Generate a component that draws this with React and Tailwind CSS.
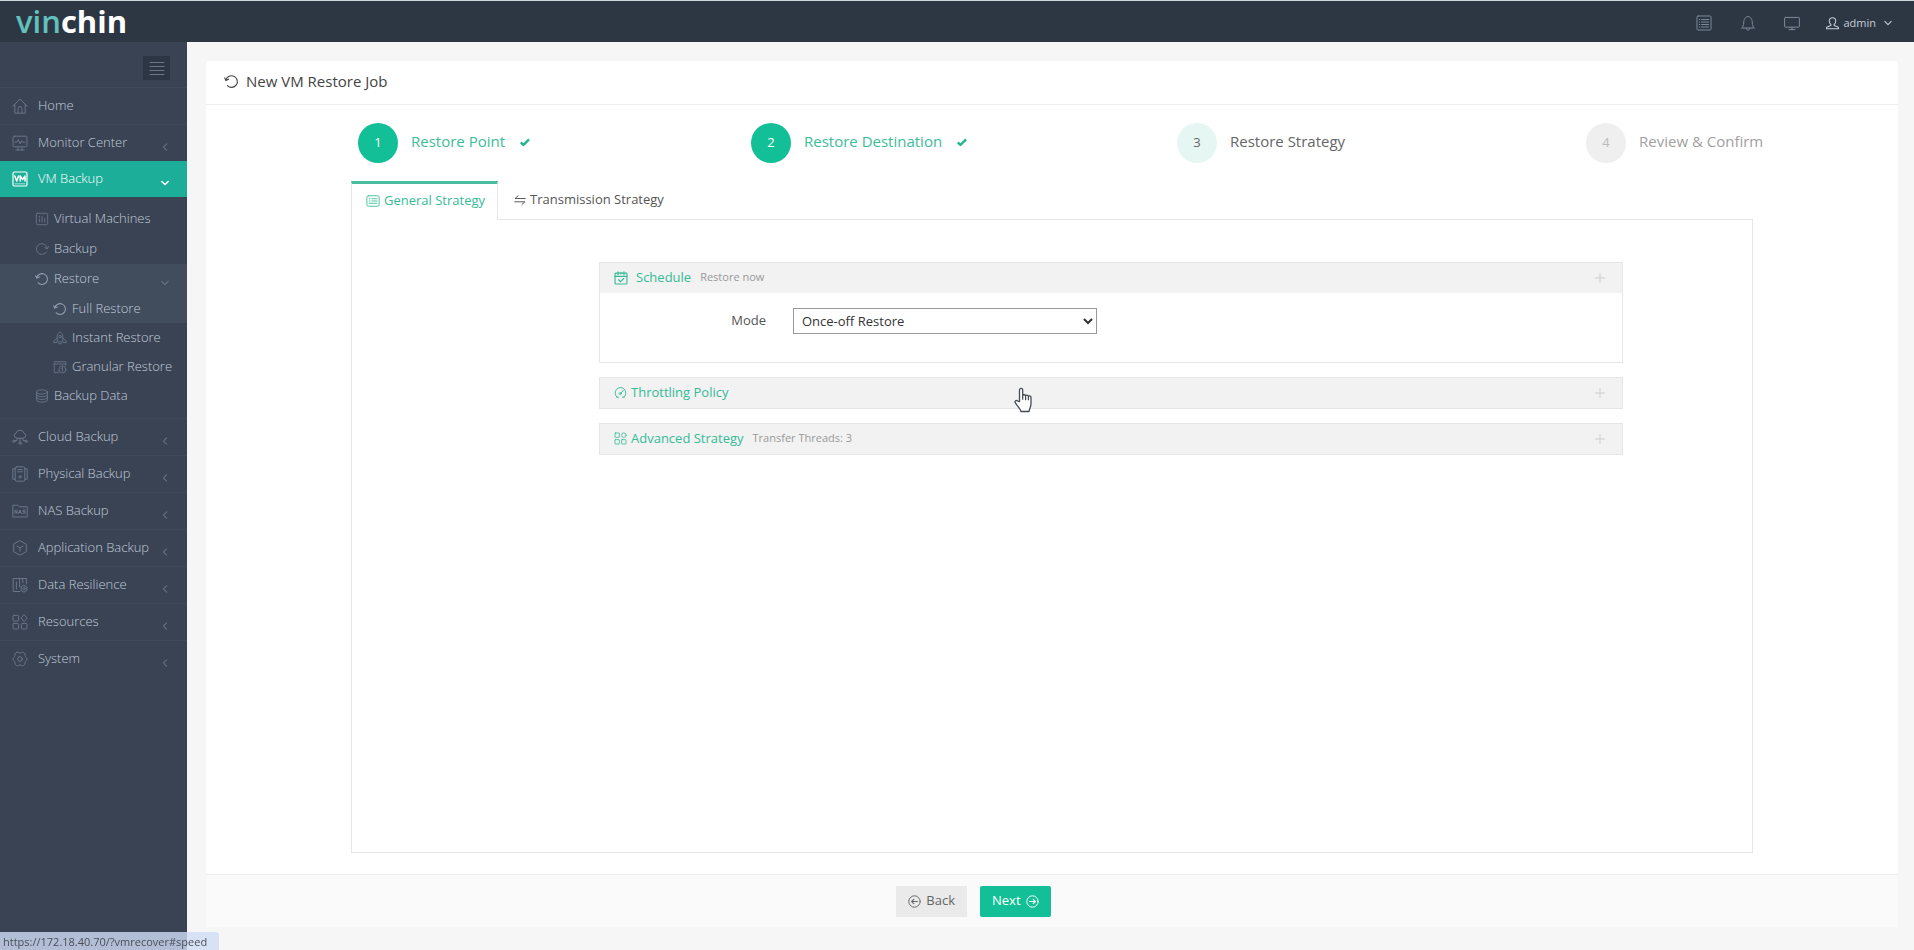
import React, { useState } from 'react';

const Icon = ({ children, className = 'size-4', box = 16 }) => (
  <svg
    viewBox={`0 0 ${box} ${box}`}
    className={`shrink-0 ${className}`}
    fill="none"
    stroke="currentColor"
    strokeWidth="1"
    strokeLinecap="round"
    strokeLinejoin="round"
    aria-hidden="true"
  >
    {children}
  </svg>
);

const HomeIcon = (props) => (
  <Icon {...props}>
    <path d="M1 8 8 1l7 7M2.800 6.600v8.600h10.400V6.600M6 15v-4.400a2 2 0 0 1 4 0V15" />
  </Icon>
);

const MonitorIcon = (props) => (
  <Icon {...props}>
    <rect x="1" y="1.200" width="14" height="10.600" rx="1.400" />
    <path d="M3 7.200h1.800l1.400-2.600 2 4.400 1.500-3.400 1 1.600H13M4 15h8M6 12v3M10 12v3" />
  </Icon>
);

const VmIcon = (props) => (
  <Icon {...props}>
    <rect x="1" y="1" width="14" height="14" rx="1.600" strokeWidth="1.200" />
    <path d="m2.800 5 1.900 5L6.600 5M8.200 10V5l2.400 3.600L13 5v5" strokeWidth="1.500" />
    <path d="M3 12.800h10" strokeWidth="1" opacity=".6" />
  </Icon>
);

const MachinesIcon = (props) => (
  <Icon {...props}>
    <rect x="1.500" y="1.500" width="13" height="13" rx="1.400" />
    <path d="M5 5v.8M5 8v3.400M8 5.200v6.200M11 7.600v3.800" />
  </Icon>
);

const RedoIcon = (props) => (
  <Icon {...props}>
    <path d="M13.200 11.200A6.200 6.200 0 1 1 14 7" />
    <path d="m11.200 6.200 2.800 1.600L15.600 5" />
  </Icon>
);

const UndoIcon = (props) => (
  <Icon {...props}>
    <path d="M2 6.600a6.200 6.200 0 1 1 1.600 5.800" strokeWidth="1.200" />
    <path d="M.8 4.200 2 6.800l2.900-1.200" strokeWidth="1.200" />
  </Icon>
);

const RocketIcon = (props) => (
  <Icon {...props}>
    <path d="M4.800 12V6C4.800 3.600 6.300 1.800 8 1c1.700.8 3.200 2.600 3.200 5v6z" />
    <circle cx="8" cy="6.400" r="1.500" />
    <path d="M4.800 8 1 11.400v1.800h3.200M11.200 8l3.800 3.400v1.800h-3.200M6.500 14.500h3" />
  </Icon>
);

const GranularIcon = (props) => (
  <Icon {...props}>
    <path d="M6 14.500H2.200a.8.8 0 0 1-.8-.8V2h13.200v4M1.400 4.600h13.200" />
    <circle cx="10.800" cy="10.800" r="4" />
    <path d="M10.800 8.800v4M9.400 10.200l1.400-1.400M6 12.800l1-1" />
  </Icon>
);

const DatabaseIcon = (props) => (
  <Icon {...props}>
    <ellipse cx="8" cy="3.400" rx="6.200" ry="2.400" />
    <path d="M1.800 3.400v9.200c0 1.300 2.800 2.400 6.200 2.400s6.200-1.100 6.200-2.400V3.400" />
    <path d="M1.800 6.500c0 1.300 2.800 2.400 6.200 2.400s6.200-1.100 6.200-2.400M1.800 9.600c0 1.300 2.800 2.400 6.200 2.400s6.200-1.100 6.200-2.400" />
  </Icon>
);

const CloudIcon = (props) => (
  <Icon {...props}>
    <path d="M4.600 9.200a2.700 2.700 0 0 1-.5-5.200A4 4 0 0 1 11.800 4a2.700 2.700 0 0 1-.4 5.200z" />
    <path d="M8 9.200v4M5 9.200v2.400H2.800M11 9.200v2.400h2.200" />
    <circle cx="8" cy="14.200" r="1.100" />
    <circle cx="1.800" cy="12.200" r="1.100" />
    <circle cx="14.200" cy="12.200" r="1.100" />
  </Icon>
);

const ServerIcon = (props) => (
  <Icon {...props}>
    <rect x="3.200" y=".8" width="9.600" height="14.400" rx="1.500" />
    <path d="M5.600 3.600h4.800M5.600 5.800h4.800M3.200 2.800H.8v10.400h2.400M12.800 2.800h2.400v10.400h-2.400" />
    <circle cx="8" cy="10.800" r="1.200" />
  </Icon>
);

const NasIcon = (props) => (
  <Icon {...props}>
    <path d="M.8 13.600V2.200h5l1.500 1.600h7.900v9.800z" />
    <path d="M3 10.400V7l2 3.400V7M6.500 10.400 7.900 7l1.400 3.400M7 9.400h1.800M13 7.200h-2v1.500h2v1.600h-2.200" />
  </Icon>
);

const CubeIcon = (props) => (
  <Icon {...props}>
    <path d="m8 .8 6.300 3.500v7.400L8 15.200l-6.300-3.500V4.300z" />
    <path d="M5 6.200 8 8l3-1.800M8 8v3.400" />
  </Icon>
);

const ResilienceIcon = (props) => (
  <Icon {...props}>
    <path d="M8 14.500H1.200v-13h13.200V7M4.400 5v7M7.600 1.800v8M10.800 1.800v3.800" />
    <circle cx="12" cy="11.800" r="1.200" />
    <path d="m12 8.400 2.900 1.700v3.400L12 15.200l-2.900-1.700v-3.400z" />
  </Icon>
);

const GridIcon = (props) => (
  <Icon {...props}>
    <rect x="1" y="1.400" width="5.600" height="5.600" rx="1" />
    <rect x="1" y="9.400" width="5.600" height="5.600" rx="1" />
    <rect x="9.400" y="9.400" width="5.600" height="5.600" rx="1" />
    <path d="m12.200.8 3 3.400-3 3.400-3-3.400z" />
  </Icon>
);

const BlocksIcon = (props) => (
  <Icon {...props}>
    <rect x="1.200" y="1.200" width="5.400" height="5.400" rx=".6" />
    <rect x="1.200" y="9.400" width="5.400" height="5.400" rx=".6" />
    <rect x="9.400" y="9.400" width="5.400" height="5.400" rx=".6" />
    <circle cx="12.100" cy="3.900" r="2.800" />
  </Icon>
);

const SystemIcon = (props) => (
  <Icon {...props}>
    <path d="M5.600 1.200c.8 0 1.200.9 2.400.9s1.600-.9 2.400-.9c1 0 2.200.8 2.500 1.700.3.800-.1 1.600.5 2.600.6 1 1.600 1.200 1.600 2.500s-1 1.500-1.600 2.500c-.6 1-.2 1.800-.5 2.600-.3.900-1.500 1.700-2.500 1.700-.8 0-1.200-.9-2.400-.9s-1.600.9-2.400.9c-1 0-2.200-.8-2.500-1.700-.3-.8.100-1.600-.5-2.600C2 9.500 1 9.300 1 8s1-1.500 1.600-2.500c.6-1 .2-1.800.5-2.600.3-.9 1.500-1.700 2.500-1.700z" />
    <circle cx="8" cy="8" r="2.300" />
  </Icon>
);

const ListIcon = (props) => (
  <Icon {...props}>
    <rect x="1" y="1" width="14" height="14" rx="1.200" />
    <path d="M3.400 4.500h.4M5.600 4.500h7M3.400 7h.4M5.600 7h7M3.400 9.500h.4M5.600 9.500h7M3.400 12h.4M5.600 12h7" />
  </Icon>
);

const BellIcon = (props) => (
  <Icon {...props}>
    <path d="M1.800 12.800c1.500-1.200 1.900-2.400 1.900-5C3.700 4.400 5.400 1.600 8 1.600s4.300 2.800 4.300 6.200c0 2.600.4 3.800 1.900 5z" />
    <path d="M6.200 13c0 1.200.8 2.200 1.800 2.200s1.800-1 1.800-2.200" />
  </Icon>
);

const ScreenIcon = (props) => (
  <Icon {...props}>
    <rect x=".6" y="2.400" width="14.800" height="9.800" rx=".8" />
    <path d="M8 12.200v2.400M5 14.600h6" />
  </Icon>
);

const UserIcon = (props) => (
  <Icon {...props}>
    <path
      d="M6 9.200C4.600 8 4 6.600 4 5c0-2.500 1.600-4 4-4s4 1.500 4 4c0 1.600-.6 3-2 4.200v1.300l4.600 1.700c.6.300.8.900.8 2.200H.6c0-1.300.2-1.900.8-2.200L6 10.500z"
      strokeWidth="1.300"
    />
  </Icon>
);

const Chevron = ({ down, className = 'size-2', weight = 1.3 }) => (
  <Icon box={10} className={className}>
    <path d={down ? 'M1 3l4 4 4-4' : 'M7 1 3 5l4 4'} strokeWidth={weight} />
  </Icon>
);

const CheckIcon = ({ className = '' }) => (
  <Icon box={12} className={`size-3 ${className}`}>
    <path d="m1.800 6.400 2.600 2.600 5.600-5.600" strokeWidth="2.400" strokeLinecap="butt" />
  </Icon>
);

const CardIcon = (props) => (
  <Icon {...props}>
    <rect x="1" y="2" width="14" height="12" rx="1.800" />
    <path d="M3.600 5.400h1M6.600 5.400h6M3.600 8h1M6.600 8h6M3.600 10.600h8.800" />
  </Icon>
);

const TransferIcon = (props) => (
  <Icon {...props}>
    <path d="M15 6H1.500l4-3.600M1 10.400h13.500l-4 3.600" strokeWidth="1.300" />
  </Icon>
);

const CalendarIcon = (props) => (
  <Icon {...props}>
    <rect x="1.200" y="2.400" width="13.600" height="12.400" rx=".8" strokeWidth="1.300" />
    <path
      d="M1.200 6.200h13.600M4.600.8v3.400M11.400.8v3.400M8 1.600v1.800M5.200 10l2.200 2.200 3.800-3.600"
      strokeWidth="1.300"
    />
  </Icon>
);

const GaugeIcon = (props) => (
  <Icon {...props}>
    <path
      d="M4 13.800a6.600 6.600 0 1 1 8 0M3.400 13.800h2.200M10.400 13.800h2.200M11.400 5.400 8.600 8.600"
      strokeWidth="1.200"
    />
    <circle cx="7.600" cy="9.400" r="1.300" />
  </Icon>
);

const ArrowCircle = ({ left }) => (
  <Icon className="size-[13px]">
    <circle cx="8" cy="8" r="7" strokeWidth="1.200" />
    <path
      d={left ? 'M11.500 8h-7M7.200 5.400 4.500 8l2.700 2.600' : 'M4.500 8h7M8.800 5.400 11.500 8l-2.700 2.600'}
      strokeWidth="1.300"
    />
  </Icon>
);

const menuTop = [
  { name: 'Home', icon: HomeIcon, leaf: true },
  { name: 'Monitor Center', icon: MonitorIcon },
];

const vmMenu = [
  { name: 'Virtual Machines', icon: MachinesIcon },
  { name: 'Backup', icon: RedoIcon },
  {
    name: 'Restore',
    icon: UndoIcon,
    children: [
      { name: 'Full Restore', icon: UndoIcon, active: true },
      { name: 'Instant Restore', icon: RocketIcon },
      { name: 'Granular Restore', icon: GranularIcon },
    ],
  },
  { name: 'Backup Data', icon: DatabaseIcon },
];

const menuBottom = [
  { name: 'Cloud Backup', icon: CloudIcon },
  { name: 'Physical Backup', icon: ServerIcon },
  { name: 'NAS Backup', icon: NasIcon },
  { name: 'Application Backup', icon: CubeIcon },
  { name: 'Data Resilience', icon: ResilienceIcon },
  { name: 'Resources', icon: GridIcon },
  { name: 'System', icon: SystemIcon },
];

const steps = [
  { name: 'Restore Point', state: 'done' },
  { name: 'Restore Destination', state: 'done' },
  { name: 'Restore Strategy', state: 'current' },
  { name: 'Review & Confirm', state: 'todo' },
];

const stepStyles = {
  done: { circle: 'bg-[#12bf97] text-white', label: 'text-[#3bbd98]' },
  current: { circle: 'bg-[#e6f7f3] text-[#666]', label: 'text-[#666]' },
  todo: { circle: 'bg-[#efefef] text-[#bbb]', label: 'text-[#a0a0a0]' },
};

const Header = () => (
  <header className="flex h-[42px] shrink-0 items-center justify-between border-t border-[#cdd5d8] bg-[#2d3643] pl-4 pr-[22px]">
    <a href="#home" className="text-[31px] leading-none">
      <span className="font-semibold text-[#62c1bd]">vin</span>
      <span className="font-bold text-white">chin</span>
    </a>
    <div className="flex items-center pt-[3px] text-[#7d8a9d]">
      <button aria-label="Tasks" className="mr-7">
        <ListIcon />
      </button>
      <button aria-label="Alerts" className="mr-7">
        <BellIcon />
      </button>
      <button aria-label="Console" className="mr-[26px]">
        <ScreenIcon />
      </button>
      <button className="flex items-center text-[11px] text-[#c3cddb]">
        <UserIcon className="size-[13px]" />
        <span className="ml-1">admin</span>
        <Chevron down className="ml-2 size-2" weight={1.4} />
      </button>
    </div>
  </header>
);

const MenuRow = ({ item }) => {
  const ItemIcon = item.icon;
  return (
    <li className="border-t border-[#3f495a]">
      <a href="#menu" className="flex h-9 items-center pl-3 pr-[18px]">
        <ItemIcon className="size-4 text-[#69768a]" />
        <span className="ml-[10px] flex-1 whitespace-nowrap">{item.name}</span>
        {!item.leaf && <Chevron className="mt-2 size-2 text-[#69768a]" />}
      </a>
    </li>
  );
};

const SubLink = ({ item, nested }) => {
  const ItemIcon = item.icon;
  return (
    <a
      href="#restore"
      className={`flex items-center pr-[18px] ${nested ? 'h-[29px] pl-[53px]' : 'h-[30px] pl-[35px]'} ${
        item.active || item.children ? 'bg-[#414c5d]' : ''
      }`}
    >
      <ItemIcon
        className={`size-[14px] ${item.active || item.children ? 'text-[#95a1b3]' : 'text-[#69768a]'}`}
      />
      <span className="ml-[5px] flex-1 whitespace-nowrap">{item.name}</span>
      {item.children && <Chevron down className="mt-2 size-2 text-[#69768a]" />}
    </a>
  );
};

const Sidebar = () => (
  <aside className="w-[187px] shrink-0 bg-[#394353] text-[13px] font-light text-[#c0cbda]">
    <div className="flex justify-end pb-[7px] pr-[17px] pt-[14px]">
      <button
        aria-label="Toggle menu"
        className="flex h-6 w-[27px] items-center justify-center bg-[#2c3644] text-[#69768a]"
      >
        <Icon>
          <path d="M1 2.500h14M1 6.500h14M1 10.500h14M1 14.500h14" />
        </Icon>
      </button>
    </div>
    <nav>
      <ul>
        {menuTop.map((item) => (
          <MenuRow key={item.name} item={item} />
        ))}
        <li>
          <a href="#vm" className="flex h-9 items-center bg-[#1cae99] pl-3 pr-[18px] text-white">
            <VmIcon />
            <span className="ml-[10px] flex-1">VM Backup</span>
            <Chevron down className="mt-2 size-2" weight={1.8} />
          </a>
          <ul className="py-[7px]">
            {vmMenu.map((item) => (
              <li key={item.name}>
                <SubLink item={item} />
                {item.children && (
                  <ul>
                    {item.children.map((child) => (
                      <li key={child.name}>
                        <SubLink item={child} nested />
                      </li>
                    ))}
                  </ul>
                )}
              </li>
            ))}
          </ul>
        </li>
        {menuBottom.map((item) => (
          <MenuRow key={item.name} item={item} />
        ))}
      </ul>
    </nav>
  </aside>
);

const Steps = () => (
  <ol className="ml-[152px] mr-[113px] grid grid-cols-[393fr_426fr_409fr_199fr] pt-[18px]">
    {steps.map((step, i) => (
      <li key={step.name} className="flex items-center text-[15px]">
        <span
          className={`flex size-10 shrink-0 items-center justify-center rounded-full text-[13px] ${stepStyles[step.state].circle}`}
        >
          {i + 1}
        </span>
        <span className="flex items-center pb-[3px] pl-[13px]">
          <span className={`whitespace-nowrap ${stepStyles[step.state].label}`}>{step.name}</span>
          {step.state === 'done' && <CheckIcon className="ml-[14px] text-[#20b590]" />}
        </span>
      </li>
    ))}
  </ol>
);

const HandCursor = () => (
  <svg viewBox="0 0 20 26" className="absolute left-[40.4%] top-[9px] h-[26px] w-5" aria-hidden="true">
    <path
      d="M6.500 14.500V3a1.600 1.600 0 0 1 3.200 0v5.800c0-1.500 2.800-1.400 2.900.3 0-1.400 2.700-1.200 2.800.5.100-1.200 2.600-1 2.600 1V17c0 3-1.500 4-2 7.500H8c-.6-2.500-3-4.600-5.600-8.600-1.200-1.900 1-3.200 2.400-1.800z"
      fill="#fff"
      stroke="#444a52"
      strokeWidth="1.300"
      strokeLinejoin="round"
    />
    <path d="M9.700 8.800v4M12.600 9.200v4M15.400 10v3.200" stroke="#444a52" strokeWidth="1.200" />
  </svg>
);

const Section = ({ icon, title, note, cursor, children }) => (
  <section className="border border-[#e6e6e6]">
    <h3 className="relative bg-[#f2f2f2]">
      <button className="flex h-[30px] w-full items-center pl-[14px] pr-[17px] text-[13px] text-[#35bb96]">
        <span className="flex items-center pb-px">
          {icon}
          <span>{title}</span>
          {note && <span className="ml-[9px] text-[11px] text-[#999]">{note}</span>}
        </span>
        <Icon box={10} className="ml-auto size-[10px] text-[#ccc]">
          <path d="M5 0v10M0 5h10" />
        </Icon>
      </button>
      {cursor && <HandCursor />}
    </h3>
    {children}
  </section>
);

const App = () => {
  const [mode, setMode] = useState('once');

  return (
    <div className="flex min-h-screen flex-col bg-[#f6f6f6] font-['Open_Sans','Noto_Sans',sans-serif] text-[#555]">
      <Header />
      <div className="flex flex-1">
        <Sidebar />
        <main className="flex flex-1 flex-col pb-[23px] pl-[19px] pr-4 pt-[19px]">
          <div className="flex flex-1 flex-col bg-white">
            <div className="flex h-11 items-center border-b border-[#efefef] pb-[2px] pl-[18px] text-[#444]">
              <UndoIcon className="size-[15px]" />
              <h1 className="ml-[7px] text-[15px]">New VM Restore Job</h1>
            </div>

            <Steps />

            <div className="mx-[145px] mb-[21px] mt-[18px] flex flex-1 flex-col">
              <div role="tablist" className="flex text-[13px]">
                <button
                  role="tab"
                  aria-selected="true"
                  className="z-10 -mb-px flex h-[39px] items-center border-x border-t-3 border-x-[#e6e6e6] border-t-[#4bbd9f] bg-white pb-[2px] pl-[14px] pr-3 text-[#35bb96]"
                >
                  <CardIcon className="size-[14px]" />
                  <span className="ml-1">General Strategy</span>
                </button>
                <button role="tab" aria-selected="false" className="flex items-center px-4 text-[#555]">
                  <TransferIcon className="size-3" />
                  <span className="ml-1">Transmission Strategy</span>
                </button>
              </div>

              <div className="flex flex-1 flex-col gap-[14px] border border-[#e6e6e6] pl-[247px] pr-[129px] pt-[42px]">
                <Section
                  title="Schedule"
                  note="Restore now"
                  icon={<CalendarIcon className="mr-2 size-[14px]" />}
                >
                  <div className="flex h-[69px] items-start pt-[15px] text-[13px]">
                    <label htmlFor="mode" className="w-[166px] text-right leading-[25px]">
                      Mode
                    </label>
                    <select
                      id="mode"
                      value={mode}
                      onChange={(e) => setMode(e.target.value)}
                      className="ml-[27px] h-[26px] w-[304px] border border-[#999] bg-white pl-1 text-[#333]"
                    >
                      <option value="once">Once-off Restore</option>
                    </select>
                  </div>
                </Section>
                <Section title="Throttling Policy" icon={<GaugeIcon className="mr-1 size-[13px]" />} cursor />
                <Section
                  title="Advanced Strategy"
                  note="Transfer Threads: 3"
                  icon={<BlocksIcon className="mr-1 size-[13px]" />}
                />
              </div>
            </div>

            <div className="flex h-[53px] items-center gap-[13px] border-t border-[#eee] bg-[#fafafa] pl-[40.8%] text-[13px]">
              <button className="flex h-[31px] items-center gap-[5px] bg-[#eaeaea] px-3 text-[#666]">
                <ArrowCircle left />
                Back
              </button>
              <button className="flex h-[31px] items-center gap-[5px] rounded-xs bg-[#12bf97] px-3 text-white">
                Next
                <ArrowCircle />
              </button>
            </div>
          </div>
        </main>
      </div>

      {/* Link target shown by the browser */}
      <div className="fixed bottom-0 left-0 z-20 h-[18px] rounded-tr-sm bg-[#d1ddf8]/80 pl-[3px] pr-3 text-[11px] leading-[20px] text-[#4a4f58]">
        https://172.18.40.70/?vmrecover#speed
      </div>
    </div>
  );
};

export default App;
